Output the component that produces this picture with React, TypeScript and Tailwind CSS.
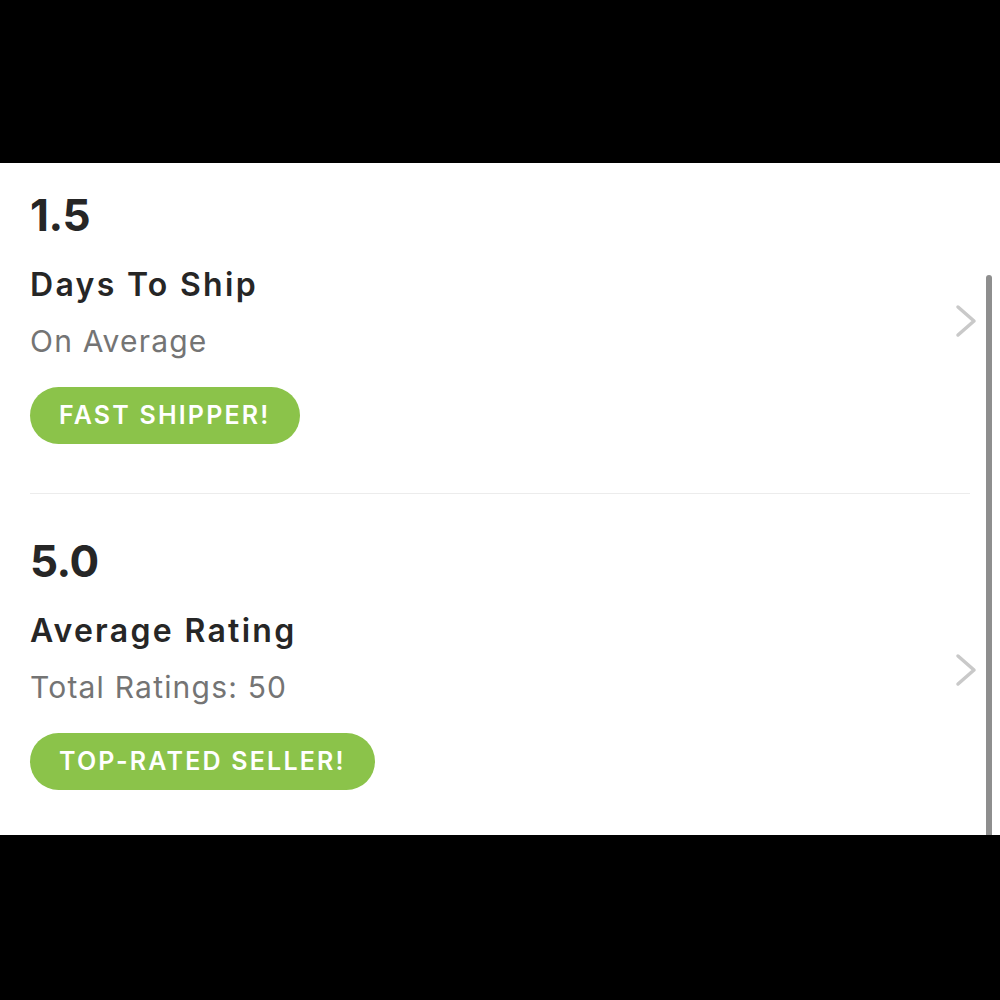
import React from 'react';

interface StatRowProps {
  value: string;
  title: string;
  subtitle: string;
  badge: string;
  className: string;
  chevronClass: string;
}

function Chevron({ className }: { className: string }) {
  return (
    <svg className={className} width="22" height="34" viewBox="0 0 22 34" fill="none">
      <path d="M3 3L19 17L3 31" stroke="#c9c9c9" strokeWidth="3.5" strokeLinecap="round" strokeLinejoin="round" />
    </svg>
  );
}

function StatRow({ value, title, subtitle, badge, className, chevronClass }: StatRowProps) {
  return (
    <div className={`flex items-center pl-[30px] pr-[23px] ${className}`}>
      <div className="flex-1 flex flex-col items-start">
        <p className="text-[44px] leading-[48px] font-bold text-[#262626] tracking-[-0.5px]">{value}</p>
        <p className="mt-[28px] text-[32px] leading-[36px] font-semibold text-[#262626] tracking-[2.3px]">{title}</p>
        <p className="mt-[20px] text-[30px] leading-[36px] text-[#747474] tracking-[1.2px]">{subtitle}</p>
        <div className="mt-[28px] h-[57px] px-[29px] rounded-full bg-[#8bc34a] flex items-center">
          <span className="text-[25px] font-semibold text-white tracking-[2.2px]">{badge}</span>
        </div>
      </div>
      <Chevron className={chevronClass} />
    </div>
  );
}

export default function App() {
  return (
    <div className="w-[1000px] h-[1000px] bg-black flex flex-col" style={{ fontFamily: 'Inter, "Noto Sans", sans-serif' }}>
      <div className="h-[163px]" />
      <div className="relative h-[672px] bg-white overflow-hidden">
        <StatRow
          value="1.5"
          title="Days To Ship"
          subtitle="On Average"
          badge="FAST SHIPPER!"
          className="pt-[28px] pb-[49px]"
          chevronClass="mt-[6px]"
        />
        <div className="mx-[30px] h-[1px] bg-[#ececec]" />
        <StatRow
          value="5.0"
          title="Average Rating"
          subtitle="Total Ratings: 50"
          badge="TOP-RATED SELLER!"
          className="pt-[43px] pb-[46px]"
          chevronClass="mt-[12px]"
        />
        <div className="absolute right-[8px] top-[112px] bottom-0 w-[6px] rounded-t-full bg-[#8e8e8e]" />
      </div>
    </div>
  );
}
